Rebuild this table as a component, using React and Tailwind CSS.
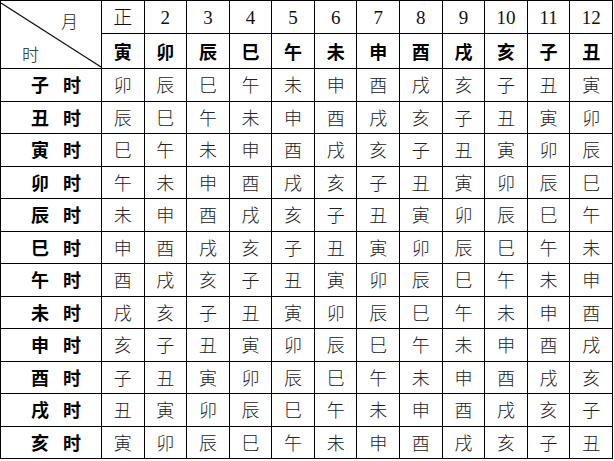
const BRANCHES = ["子", "丑", "寅", "卯", "辰", "巳", "午", "未", "申", "酉", "戌", "亥"];
const MONTHS = ["正", "2", "3", "4", "5", "6", "7", "8", "9", "10", "11", "12"];

const serif = "font-['Liberation_Serif','Noto_Sans_CJK_SC',serif]";
const cjk = "font-['Noto_Sans_CJK_SC',sans-serif]";

export default function App() {
  return (
    <div className="w-[614px] h-[461px] bg-white">
      <div className="w-[613px] grid grid-cols-[100px_repeat(12,1fr)] grid-rows-[32px_34px_repeat(12,31.5px)] gap-px p-px bg-black">
        {/* corner cell with diagonal */}
        <div className={`relative row-span-2 bg-white ${cjk} font-light text-[17px] text-[#222]`}>
          <svg className="absolute inset-0 w-full h-full" viewBox="0 0 100 67" preserveAspectRatio="none">
            <line x1="0" y1="2" x2="100" y2="66" stroke="#111" strokeWidth="1.3" />
          </svg>
          <span className="absolute left-[60px] top-[7px]">月</span>
          <span className="absolute left-[21px] top-[40px]">时</span>
        </div>

        {MONTHS.map((m) => (
          <div
            key={m}
            className={`flex items-center justify-center pt-[3px] bg-white ${serif} text-[19px] text-[#111] ${m === "正" ? "font-light" : ""}`}
          >
            {m}
          </div>
        ))}

        {MONTHS.map((m, j) => (
          <div key={"b" + m} className={`flex items-center justify-center bg-white ${cjk} font-bold text-[18px] text-black`}>
            {BRANCHES[(j + 2) % 12]}
          </div>
        ))}

        {BRANCHES.map((h, i) => (
          <Row key={h} hour={h} i={i} />
        ))}
      </div>
    </div>
  );
}

function Row({ hour, i }) {
  return (
    <>
      <div className={`flex items-center justify-center gap-[14px] pl-[10px] bg-white ${cjk} font-bold text-[18px] text-black`}>
        <span>{hour}</span>
        <span>时</span>
      </div>
      {MONTHS.map((m, j) => (
        <div key={m} className={`flex items-center justify-center bg-white ${cjk} font-light text-[18px] text-[#222]`}>
          {BRANCHES[(3 + i + j) % 12]}
        </div>
      ))}
    </>
  );
}
